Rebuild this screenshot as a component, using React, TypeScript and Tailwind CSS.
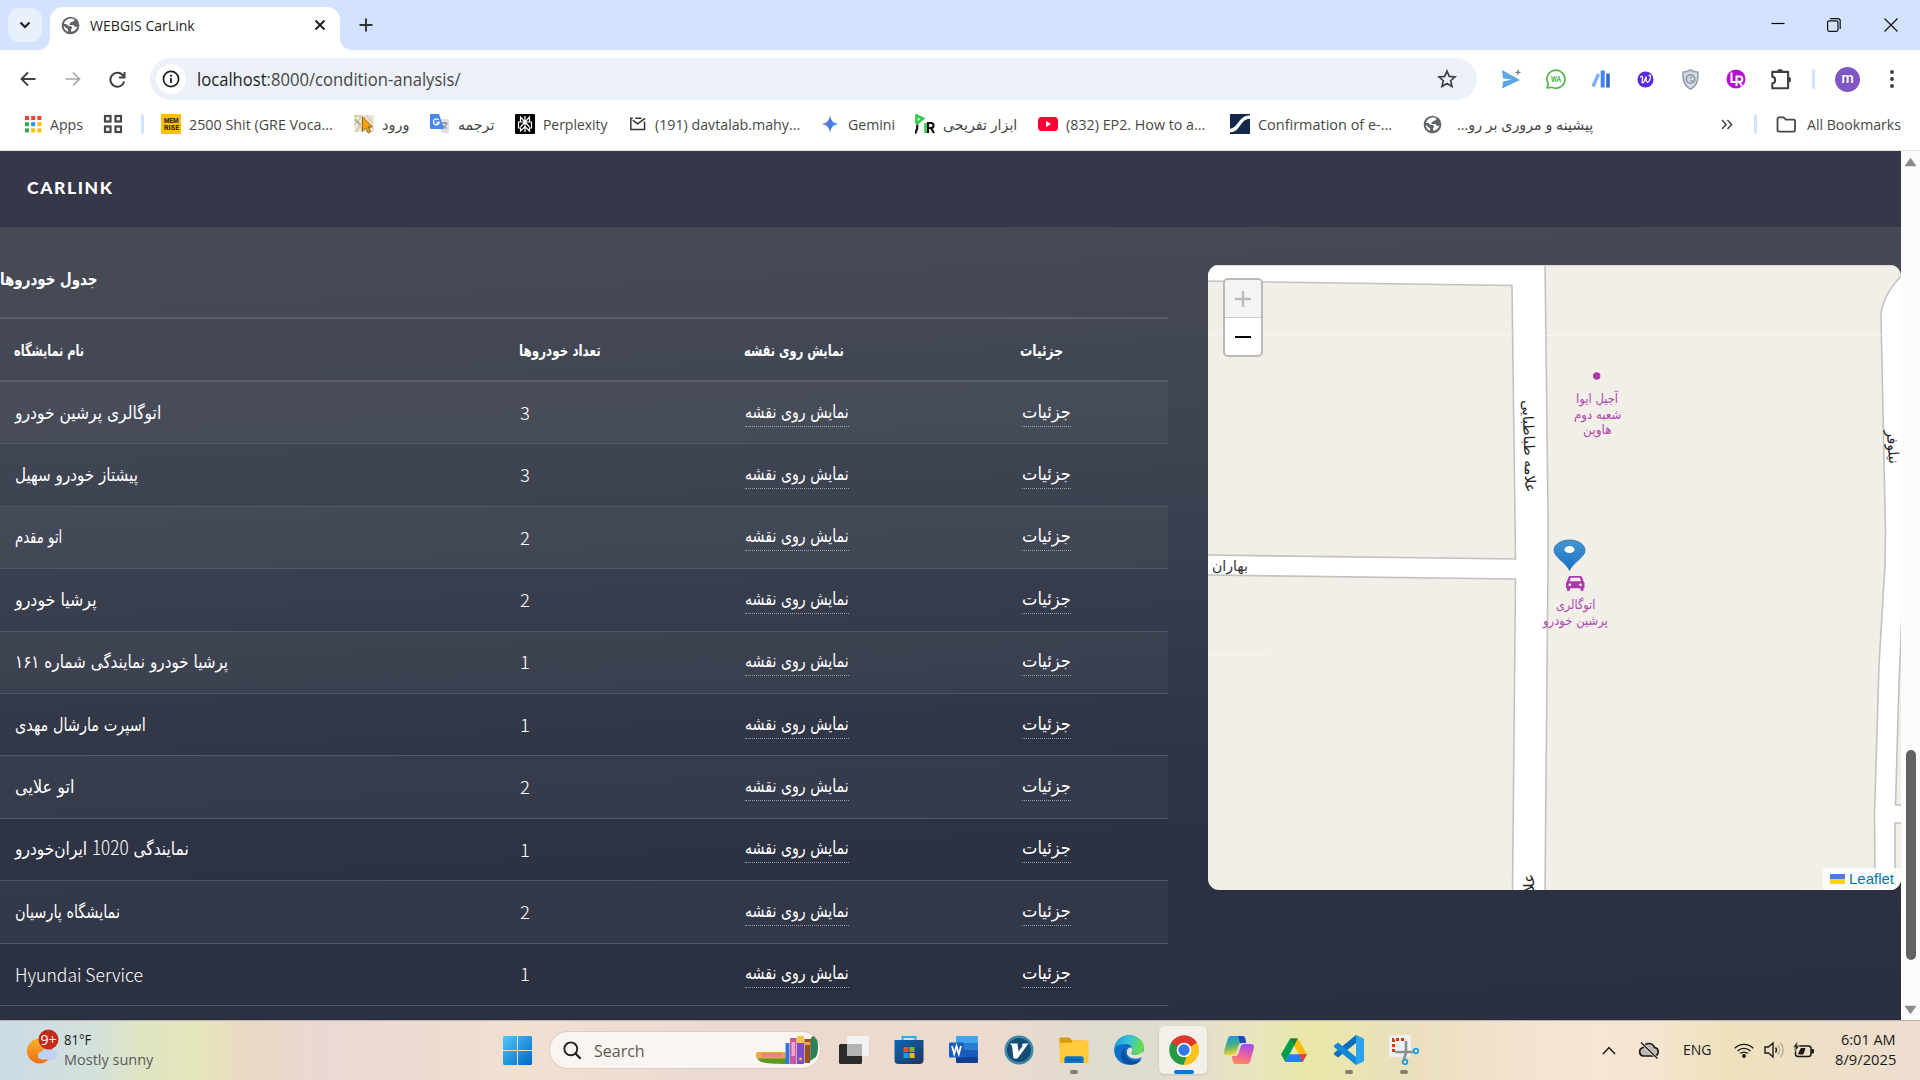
import React, { useLayoutEffect, useRef, useState } from "react";

const ui = "font-['Open_Sans','Noto_Sans','DejaVu_Sans',sans-serif]";

/* Single line of text squeezed or stretched to a given width. */
function Fit({ w, className = "", rtl = false, children }: { w: number; className?: string; rtl?: boolean; children: React.ReactNode }) {
  const ref = useRef<HTMLSpanElement>(null);
  const [k, setK] = useState(1);
  useLayoutEffect(() => {
    if (ref.current) setK(w / ref.current.offsetWidth);
  }, [w]);
  return (
    <span className="block shrink-0 whitespace-nowrap" style={{ width: w }}>
      <span ref={ref} dir={rtl ? "rtl" : "ltr"} className={"inline-block origin-left align-top " + className} style={{ transform: `scaleX(${k})` }}>
        {children}
      </span>
    </span>
  );
}

const Globe = () => (
  <svg viewBox="0 0 20 20" className="h-[19px] w-[19px]">
    <circle cx="10" cy="10" r="9.3" fill="#5f6368" />
    <path d="M10 2.6c2.2 0 3 .5 4.2 1.4-.3 1.5-1.5 2.2-3.200 2.300-1 .2-.7 1.400-1.700 1.600-1 .2-.8 1.300.2 1.500h3c1.600.2 1.300 2.200 3 2 .7 0 1.300-.1 1.800-.4-.9 3-3.300 5-6.500 5.600l-.3-1.900c-.2-1.300 1.300-1.600 1.200-2.600-.2-1.400-2.300-1.500-3.400-1.600C6.700 10.300 6.600 8.600 4.900 8.500H3.100C3.900 5 6.700 2.600 10 2.600z" fill="#fff" />
    <path d="M2.800 10.500c1.700.2 1.500 2 3.200 2.400 1.300.4 1.500 1.400 1.500 3.800C4.800 15.700 2.900 13.400 2.800 10.500z" fill="#fff" />
  </svg>
);

const Sep = () => <span className="block h-[20px] w-[3px] rounded bg-[#d3e3fd]" />;

function TabStrip() {
  return (
    <div className="flex h-[50px] items-start bg-[#d3e3fd]">
      <button className="ml-2 mt-2 flex h-[34px] w-[34px] items-center justify-center rounded-[11px] bg-[#e9f0fd]">
        <svg viewBox="0 0 12 8" className="h-[8px] w-[12px]"><path d="M1.500 1.500 6 6l4.500-4.500" fill="none" stroke="#1f1f1f" strokeWidth="2.200" /></svg>
      </button>
      <svg viewBox="0 0 12 12" className="-ml-[4px] mt-[38px] h-[12px] w-[12px]"><path d="M12 0v12H0A12 12 0 0 0 12 0z" fill="#fff" /></svg>
      <div className="mt-[7px] flex h-[43px] w-[290px] items-center rounded-t-[13px] bg-white pb-[7px] pl-[11px]">
        <Globe />
        <div className="ml-[10px] w-[220px] pt-px"><Fit w={105} className={`${ui} text-[15px] text-[#1f1f1f]`}>WEBGIS CarLink</Fit></div>
        <svg viewBox="0 0 12 12" className="ml-[4px] h-[12px] w-[12px] shrink-0"><path d="M1.500 1.500l9 9M10.500 1.500l-9 9" stroke="#1f1f1f" strokeWidth="1.900" /></svg>
      </div>
      <svg viewBox="0 0 12 12" className="mt-[38px] h-[12px] w-[12px]"><path d="M0 0v12h12A12 12 0 0 1 0 0z" fill="#fff" /></svg>
      <svg viewBox="0 0 14 14" className="ml-[7px] mt-[18px] h-[14px] w-[14px]"><path d="M7 .5v13M.5 7h13" stroke="#333" strokeWidth="1.900" /></svg>
      <div className="ml-auto mr-[22px] flex">
        <svg viewBox="0 0 14 14" className="mt-[17px] h-[14px] w-[14px]"><path d="M.5 6.500h13" stroke="#000" strokeWidth="1.200" /></svg>
        <svg viewBox="0 0 14 14" className="ml-[42px] mt-[18px] h-[14px] w-[14px]" fill="none" stroke="#111" strokeWidth="1.200"><rect x=".6" y="2.800" width="10.400" height="10.500" rx="1.500" /><path d="M3 .7h8c1.400 0 2.200.8 2.200 2.200v8" /></svg>
        <svg viewBox="0 0 14 14" className="ml-[43px] mt-[18px] h-[14px] w-[14px]"><path d="M.5.5l13 13M13.500.5l-13 13" stroke="#111" strokeWidth="1.200" /></svg>
      </div>
    </div>
  );
}

const extensions = [
  <svg key="a" viewBox="0 0 20 20" className="h-[20px] w-[20px]"><path d="M1 1l18 10L1 19.500l1.200-7.300 8.800-1.400-9-1.500z" fill="#5ba7e3" /><path d="M16.500 .3v6M13.500 3.300h6" stroke="#fff" strokeWidth="3" /><path d="M17 .8v5M14.500 3.300h5" stroke="#777" strokeWidth="1.300" /></svg>,
  <svg key="b" viewBox="0 0 22 22" className="h-[22px] w-[22px]"><path d="M2.200 19.800l1-4A9 9 0 1 1 7 19.300z" fill="#fff" stroke="#52b84b" strokeWidth="1.700" /><text x="11" y="14.200" textAnchor="middle" textLength="10" lengthAdjust="spacingAndGlyphs" fontFamily="Open Sans, sans-serif" fontWeight="700" fontSize="9" fill="#46b03f">WA</text></svg>,
  <svg key="c" viewBox="0 0 20 20" className="h-[20px] w-[20px]"><path d="M7.500 5 2 17.500" stroke="#80aefa" strokeWidth="3.400" /><path d="M11.700 1.500v17" stroke="#4285f4" strokeWidth="4" /><path d="M17 4.500v14" stroke="#326acb" strokeWidth="3.600" /></svg>,
  <svg key="d" viewBox="0 0 18 18" className="h-[17px] w-[17px]"><circle cx="9" cy="9" r="8.500" fill="#5b2be0" /><path d="M3.500 7c2.200-3.500 3 0 2 3.500-.8 3 1.500 3 3-1.500 1-3 1.500-4 1.200-.6-.3 5 3 4 4.300-.6.8-3.500-.6-4.500-1.500-2.200" fill="none" stroke="#fff" strokeWidth="1.300" /></svg>,
  <svg key="e" viewBox="0 0 18 22" className="h-[21px] w-[17px]"><path d="M9 .8c2.500 1.700 5 2.300 8 2.400 0 8-.5 14-8 18-7.500-4-8-10-8-18C4 3.100 6.500 2.500 9 .8z" fill="#d5dbe4" stroke="#8d98aa" strokeWidth="1.500" /><circle cx="9" cy="10.500" r="4.500" fill="none" stroke="#8794a8" strokeWidth="1.700" /><path d="M8.500 9.500 11 8M9 12l3 1" stroke="#8794a8" strokeWidth="1.500" /></svg>,
  <svg key="f" viewBox="0 0 20 20" className="h-[20px] w-[20px]"><circle cx="10" cy="10" r="9.500" fill="#b310cf" /><path d="M5.500 3.500v9.500h5M10.500 17V7.500h3.200a2.600 2.600 0 0 1 0 5.300h-3M13 12.800l3 4" fill="none" stroke="#fff" strokeWidth="2" /></svg>,
  <svg key="g" viewBox="0 0 22 22" className="h-[24px] w-[24px]"><path d="M3 4.500h14.500v15H3v-4.300c3.500-.6 3.500-6 0-6.400z" fill="none" stroke="#3f4145" strokeWidth="1.900" strokeLinejoin="round" /><path d="M7.500 4.500a2.600 2.600 0 0 1 5.200 0zM17.500 9a2.700 2.700 0 0 1 0 5.400z" fill="#3f4145" /></svg>,
];

function Toolbar() {
  return (
    <div className="flex h-[58px] items-center">
      <svg viewBox="0 0 16 16" className="ml-[20px] h-[16px] w-[16px]"><path d="M15.500 8H1.500M8 1.500 1.500 8 8 14.500" fill="none" stroke="#3f4145" strokeWidth="1.900" /></svg>
      <svg viewBox="0 0 16 16" className="ml-[29px] h-[16px] w-[16px]"><path d="M.5 8h14M8 1.500 14.500 8 8 14.500" fill="none" stroke="#a3a5a8" strokeWidth="1.700" /></svg>
      <svg viewBox="0 0 17 17" className="ml-[28px] h-[17px] w-[17px]"><path d="M14.300 5A7 7 0 1 0 15.200 10.500M15.500 1v5.600H10" fill="none" stroke="#3f4145" strokeWidth="2" /></svg>
      <div className="ml-[24px] flex h-[42px] w-[1327px] items-center rounded-full bg-[#ecf0f9]">
        <span className="ml-[6px] flex h-[30px] w-[30px] items-center justify-center rounded-full bg-white">
          <svg viewBox="0 0 18 18" className="h-[18px] w-[18px]"><circle cx="9" cy="9" r="7.600" fill="none" stroke="#1f1f1f" strokeWidth="1.700" /><path d="M9 8v5M9 4.800v1.900" stroke="#1f1f1f" strokeWidth="1.800" /></svg>
        </span>
        <div className="ml-[11px]"><Fit w={264} className={`${ui} text-[17.5px] text-[#474747]`}><span className="text-[#1f1f1f]">localhost</span>:8000/condition-analysis/</Fit></div>
        <svg viewBox="0 0 20 20" className="ml-auto mr-[20px] h-[20px] w-[20px]"><path d="M10 2l2.300 5.400 5.700.5-4.300 3.800 1.300 5.700-5-3-5 3 1.300-5.700L2 7.900l5.700-.5z" fill="none" stroke="#3f4145" strokeWidth="1.700" /></svg>
      </div>
      <div className="ml-[11px] flex">
        {extensions.map((e, i) => <span key={i} className="flex w-[45px] items-center justify-center">{e}</span>)}
      </div>
      <div className="ml-[9px]"><Sep /></div>
      <span className="ml-[20px] flex h-[25px] w-[25px] items-center justify-center rounded-full bg-[#7e57c2] pb-[2px] font-['Roboto',sans-serif] text-[14px] font-medium text-white">m</span>
      <svg viewBox="0 0 6 20" className="ml-[29px] h-[20px] w-[6px]" fill="#3f4145"><circle cx="3" cy="3" r="2" /><circle cx="3" cy="10" r="2" /><circle cx="3" cy="17" r="2" /></svg>
    </div>
  );
}

const appDots = ["#f44336", "#f44336", "#f44336", "#34a853", "#2196f3", "#fbbc05", "#34a853", "#fbbc05", "#fbbc05"];

const bm = {
  apps: <svg viewBox="0 0 18 18" className="h-[18px] w-[18px]">{appDots.map((c, i) => <rect key={i} x={1 + (i % 3) * 6.200} y={1 + Math.floor(i / 3) * 6.200} width="4" height="4" fill={c} />)}</svg>,
  grid: <svg viewBox="0 0 20 20" className="h-[20px] w-[20px]" fill="none" stroke="#474747" strokeWidth="2.200"><rect x="2" y="2" width="5.500" height="5.500" /><rect x="12.500" y="2" width="5.500" height="5.500" /><rect x="2" y="12.500" width="5.500" height="5.500" /><rect x="12.500" y="12.500" width="5.500" height="5.500" /></svg>,
  mem: <span className="flex h-[20px] w-[20px] flex-col items-center justify-center bg-[#ffc107] font-['Roboto',sans-serif] text-[8px] font-black leading-[7px] text-[#3a2c10]"><Fit w={15}>MEM</Fit><Fit w={15}>RISE</Fit></span>,
  login: <svg viewBox="0 0 20 20" className="h-[20px] w-[20px]"><path fill="#eee4d4" d="M0 1h20v17H0z" /><path d="M0 2h9M2 18 11 3M0 11l8-8M9 18 4 6M12 1l7 8" stroke="#c9b48c" strokeWidth="1" /><path d="M1 5l4 5M12 15l5-2" stroke="#86b98a" strokeWidth="1.500" /><path d="M8.500 3v14l3.200-3 2.400 5 2.600-1.300-2.500-4.900h4.300z" fill="#ff9f0a" stroke="#70531c" strokeWidth=".8" /></svg>,
  translate: <svg viewBox="0 0 20 20" className="h-[20px] w-[20px]"><path d="M7 5h11a1 1 0 0 1 1 1v12a1 1 0 0 1-1 1h-6z" fill="#dcdfe4" /><path d="M11.500 9h6M14.500 8v1.500M16.500 9.500c-.7 2.500-2 4-4 5M13 11c.8 1.500 2 2.600 4 3.500" stroke="#6f7f8f" fill="none" /><path d="M1 0h8l5 15H1.500A1.500 1.500 0 0 1 0 13.500V1a1 1 0 0 1 1-1z" fill="#4a86ee" /><path d="M8.800 6.200A2.900 2.900 0 1 0 9.200 8.500H6.500" fill="none" stroke="#fff" strokeWidth="1.300" /></svg>,
  perp: <svg viewBox="0 0 20 20" className="h-[20px] w-[20px]"><rect width="20" height="20" rx="1" fill="#000" /><path d="M10 2v16M10 8 5.500 3v5h9V3zM5.500 8H3.500v6h2v3L10 12.500 14.500 17v-3h2V8h-2M10 8l-4.500 5M10 8l4.500 5" stroke="#fff" strokeWidth="1.200" fill="none" /></svg>,
  mail: <svg viewBox="0 0 20 16" className="h-[14px] w-[18px]"><path d="M4 1.500H1.800v12.700h15.700V5M7 1.500h7M4 3.500l5.500 4.200L18 1.500" fill="none" stroke="#333" strokeWidth="1.700" /></svg>,
  gem: <svg viewBox="0 0 20 20" className="h-[20px] w-[20px]"><defs><linearGradient id="gem" x1="0" y1="0" x2="1" y2="0"><stop offset="0" stopColor="#9b72cb" /><stop offset=".5" stopColor="#4a7bdc" /><stop offset="1" stopColor="#2fa3ec" /></linearGradient></defs><path d="M10 1c.8 5.500 3 8.200 8.500 9-5.500.8-7.700 3.500-8.500 9-.8-5.500-3-8.200-8.500-9C7 9.200 9.200 6.500 10 1z" fill="url(#gem)" /></svg>,
  pr: <svg viewBox="0 0 20 20" className="h-[20px] w-[20px]" fill="none"><path d="M1.500 10V1.500L8 4.500 2 9.500" stroke="#2ecc40" strokeWidth="2.600" /><path d="M2.200 10.500v4l-2 5" stroke="#111" strokeWidth="2.200" /><path d="M10.500 19V9" stroke="#2ecc40" strokeWidth="2.500" /><path d="M13 19V9h3a2.500 2.500 0 0 1 0 5h-3M16 14l3 5" stroke="#111" strokeWidth="2.200" /></svg>,
  yt: <svg viewBox="0 0 20 20" className="h-[20px] w-[20px]"><rect y="3" width="20" height="14" rx="3.500" fill="#ff0033" /><path d="M8 7l5 3-5 3z" fill="#fff" /></svg>,
  s: <svg viewBox="0 0 20 20" className="h-[20px] w-[20px]"><path fill="#14284b" d="M0 0h20v20H0z" /><path d="M0 16.500c10 0 8-13 20-13.500" fill="none" stroke="#fff" strokeWidth="3.400" /></svg>,
  folder: <svg viewBox="0 0 22 18" className="h-[17px] w-[21px]"><path d="M1.500 3a1.500 1.500 0 0 1 1.500-1.500h5l2.300 2.300h8.200A1.500 1.500 0 0 1 20 5.300V15a1.500 1.500 0 0 1-1.500 1.500H3A1.500 1.500 0 0 1 1.500 15z" fill="none" stroke="#474747" strokeWidth="1.900" /></svg>,
};

type BM = { cls: string; icon: React.ReactNode; text?: string; w?: number; rtl?: boolean; gap?: string };
const bookmarks: BM[] = [
  { cls: "w-[79px]", icon: bm.apps, text: "Apps", w: 33 },
  { cls: "w-[38px]", icon: bm.grid },
  { cls: "w-[20px]", icon: <Sep /> },
  { cls: "w-[193px]", icon: bm.mem, text: "2500 Shit (GRE Voca...", w: 144 },
  { cls: "w-[76px]", icon: bm.login, text: "ورود", w: 27, rtl: true },
  { cls: "w-[85px]", icon: bm.translate, text: "ترجمه", w: 36, rtl: true },
  { cls: "w-[114px]", icon: bm.perp, text: "Perplexity", w: 64 },
  { cls: "w-[191px]", icon: bm.mail, text: "(191) davtalab.mahy...", w: 145 },
  { cls: "w-[95px]", icon: bm.gem, text: "Gemini", w: 47 },
  { cls: "w-[123px]", icon: bm.pr, text: "ابزار تفریحی", w: 74, rtl: true },
  { cls: "w-[192px]", icon: bm.yt, text: "(832) EP2. How to a...", w: 139 },
  { cls: "w-[193px]", icon: bm.s, text: "Confirmation of e-...", w: 134 },
  { cls: "w-[297px]", icon: <Globe />, text: "پیشینه و مروری بر رو...", w: 136, rtl: true, gap: "gap-[15px]" },
];

function Bookmarks() {
  return (
    <div className={`flex h-[42px] items-center pb-[10px] pl-[24px] pt-0 text-[15px] text-[#474747] ${ui}`}>
      {bookmarks.map((b, i) => (
        <div key={i} className={`flex shrink-0 items-center ${b.gap ?? "gap-[8px]"} ${b.cls}`}>
          {b.icon}
          {b.text && <Fit w={b.w!} rtl={b.rtl}>{b.text}</Fit>}
        </div>
      ))}
      <svg viewBox="0 0 14 12" className="h-[11px] w-[14px]"><path d="M1.500 1 6 6l-4.500 5M7.500 1 12 6l-4.500 5" fill="none" stroke="#474747" strokeWidth="1.700" /></svg>
      <div className="ml-[20px]"><Sep /></div>
      <div className="ml-[19px] flex items-center gap-[10px]">{bm.folder}<Fit w={94}>All Bookmarks</Fit></div>
    </div>
  );
}

const latin = "font-['Noto_Sans_CJK_SC',sans-serif] font-light";
const fa = "font-['DejaVu_Sans',sans-serif]";

const rows: [React.ReactNode, number, string][] = [
  ["اتوگالری پرشین خودرو", 146, "3"],
  ["پیشتاز خودرو سهیل", 123, "3"],
  ["اتو مقدم", 47, "2"],
  ["پرشیا خودرو", 82, "2"],
  ["پرشیا خودرو نمایندگی شماره ۱۶۱", 213, "1"],
  ["اسپرت مارشال مهدی", 131, "1"],
  ["اتو علایی", 60, "2"],
  [<>نمایندگی <span className={`${latin} text-[20px] leading-none`}>1020</span> ایران‌خودرو</>, 174, "1"],
  ["نمایشگاه پارسیان", 105, "2"],
  ["Hyundai Service", 128, "1"],
];

const Link = ({ w, children }: { w: number; children: string }) => (
  <a className="block h-[28px] border-b border-dotted border-white/50 text-[18px] leading-[26px] text-white" style={{ width: w }}>
    <Fit w={w} rtl className={fa}>{children}</Fit>
  </a>
);

function CarTable() {
  return (
    <section className="w-[1168px]">
      <h2 className="h-[90px] pt-[37px] text-[17px] font-bold leading-[30px] text-white"><Fit w={97} rtl className={fa}>جدول خودروها</Fit></h2>
      <div className="grid h-[65px] grid-cols-[505px_225px_276px_162px] items-center border-y-2 border-[#5b5f6d] pt-[2px] text-[16px] font-bold text-white">
        <div className="pl-[14px]"><Fit w={70} rtl className={fa}>نام نمایشگاه</Fit></div>
        <div className="pl-[14px]"><Fit w={82} rtl className={fa}>تعداد خودروها</Fit></div>
        <div className="pl-[14px]"><Fit w={100} rtl className={fa}>نمایش روی نقشه</Fit></div>
        <div className="pl-[14px]"><Fit w={43} rtl className={fa}>جزئیات</Fit></div>
      </div>
      <div>
        {rows.map(([name, w, n], i) => (
          <div key={i} className="grid h-[62.4px] grid-cols-[505px_225px_276px_162px] items-center border-b border-[#525767] text-[18px] text-white odd:bg-white/[0.035]">
            <div className="pl-[15px]">
              {i === 9 ? <Fit w={w} className={`${latin} relative top-px text-[18.5px] text-white`}>{name}</Fit> : <Fit w={w} rtl className={`${fa} leading-[28px]`}>{name}</Fit>}
            </div>
            <div className={`pl-[15px] text-[18.500px] text-white ${latin}`}>{n}</div>
            <div className="pl-[15px]"><Link w={104}>نمایش روی نقشه</Link></div>
            <div className="pl-[16px]"><Link w={49}>جزئیات</Link></div>
          </div>
        ))}
      </div>
    </section>
  );
}

function StreetMap() {
  return (
    <div className="relative h-[625px] w-[693px] overflow-hidden rounded-[11px] bg-[#f2efe9]">
      <svg viewBox="0 0 693 625" className="block h-[625px] w-[693px]">
        <g fill="#fff" stroke="#c3c2bf" strokeWidth="1.600">
          <path d="M-3-3H337L340 250V300L337 628H304.500L307.500 314-3 310V290L307.500 294 304 20.500-3 16z" />
          <path d="M696 8C682 22 674 35 673 50L677.500 268 677 300 671 400 666.500 548 667 628H687V558H696V540H687.500L691 418 696 300z" />
        </g>
        <path d="M0 .7H693" stroke="#d6d3d1" />
        <path d="M0 70.500H693M0 390.500H58" stroke="#fff" strokeOpacity=".35" />
        <circle cx="388.700" cy="111" r="3.700" fill="#ac39ac" />
        <defs><linearGradient id="pin" x1="0" y1="0" x2="0" y2="1"><stop offset="0" stopColor="#4596cf" /><stop offset="1" stopColor="#1870c9" /></linearGradient></defs>
        <path d="M361.500 305.500C358.500 298 346 292 346 285.500 346 279.500 353 275 361.500 275S377 279.500 377 285.500C377 292 364.500 298 361.500 305.500z" fill="url(#pin)" stroke="#2a6fa8" strokeWidth=".8" />
        <ellipse cx="361.500" cy="284.500" rx="5" ry="3.600" fill="#fff" />
        <path d="M362.500 311h9.500c1.200 0 2 .6 2.300 1.700l1.300 3.800c.6.4.9 1 .9 1.800v5h-1v2.500h-3V323.300h-10.500v2.500h-3v-2.500h-1v-5c0-.8.3-1.400.9-1.800l1.300-3.800c.3-1.100 1.100-1.700 2.300-1.700zm.2 1.700-1.100 3.600h11.400l-1.100-3.600z" fill="#ac39ac" />
        <circle cx="361.800" cy="319.800" r="1.400" fill="#f2efe9" /><circle cx="372.500" cy="319.800" r="1.400" fill="#f2efe9" />
      </svg>
      <div className={`absolute left-[365px] top-[126px] flex w-[48px] flex-col items-center text-[13px] leading-[15.5px] text-[#b048b0] ${fa}`}>
        <Fit w={42} rtl>آجیل ایوا</Fit><Fit w={47} rtl>شعبه دوم</Fit><Fit w={29} rtl>هاوین</Fit>
      </div>
      <div className={`absolute left-[334px] top-[332px] flex w-[66px] flex-col items-center text-[13px] leading-[15.5px] text-[#b048b0] ${fa}`}>
        <Fit w={39} rtl>اتوگالری</Fit><Fit w={65} rtl>پرشین خودرو</Fit>
      </div>
      <div className={`absolute left-[4px] top-[290px] text-[14.500px] leading-[22px] text-[#333] ${fa}`}><Fit w={36} rtl>بهاران</Fit></div>
      <div className={`absolute left-[275px] top-[170px] rotate-[88deg] text-[14.500px] leading-[22px] text-[#222] ${fa}`}><Fit w={92} rtl>علامه طباطبایی</Fit></div>
      <div className={`absolute left-[668px] top-[171px] rotate-[86deg] text-[14.500px] leading-[22px] text-[#222] ${fa}`}><Fit w={34} rtl>نیلوفر</Fit></div>
      <div className={`absolute left-[312px] top-[607px] -rotate-90 text-[14.500px] leading-[22px] text-[#222] ${fa}`}><Fit w={18} rtl>علا</Fit></div>
      <div className="absolute left-[14.5px] top-[13px] h-[79px] w-[40px] overflow-hidden rounded-[5px] border-2 border-[#bbb9b6] bg-white">
        <div className="flex h-[38px] items-center justify-center border-b border-[#ccc] bg-[#f4f4f4]"><svg viewBox="0 0 16 16" className="h-[16px] w-[16px]"><path d="M8 0v16M0 8h16" stroke="#bbb" strokeWidth="2.400" /></svg></div>
        <div className="flex h-[38px] items-center justify-center"><svg viewBox="0 0 16 4" className="h-[4px] w-[16px]"><path d="M0 2h16" stroke="#000" strokeWidth="2.200" /></svg></div>
      </div>
      <div className="absolute bottom-0 right-0 flex h-[22px] w-[78px] items-center bg-white/80 pl-[7px] font-['Liberation_Sans',sans-serif] text-[15px] text-[#0078A8]">
        <span className="mr-[4px] block h-[10px] w-[15px] border-b-[5px] border-[#ffd500] bg-[#4c7be1]" />
        <Fit w={45}>Leaflet</Fit>
      </div>
    </div>
  );
}

function Scrollbar() {
  return (
    <div className="flex w-[19px] flex-col items-center bg-[#fcfcfc]">
      <svg viewBox="0 0 14 10" className="mt-[6px] h-[10px] w-[13px]"><path d="M7 .5 13.500 9.500H.5z" fill="#8b8b8b" /></svg>
      <span className="mt-[583px] block h-[210px] w-[10px] rounded-full bg-[#636363]" />
      <svg viewBox="0 0 14 10" className="mb-[5px] mt-auto h-[10px] w-[13px]"><path d="M7 9.500 13.500.5H.5z" fill="#8b8b8b" /></svg>
    </div>
  );
}

const apps = {
  win: <svg viewBox="0 0 29 29" className="h-[29px] w-[29px]"><defs><linearGradient id="win" x1="0" y1="0" x2="1" y2="1"><stop offset="0" stopColor="#4cc8fb" /><stop offset="1" stopColor="#0067c5" /></linearGradient></defs><path d="M1 0h13v14H0V1zM15 0h13l1 1v13H15zM0 15h14v14H1l-1-1zM15 15h14v13l-1 1H15z" fill="url(#win)" /></svg>,
  task: <svg viewBox="0 0 30 28" className="h-[28px] w-[30px]"><rect y="8" width="23" height="20" rx="1.500" fill="#2b2b2b" /><rect x="8" y="0" width="22" height="20" rx="1.500" fill="#f2f2f2" /><path d="M8 8h15v12H8z" fill="#b3b3b3" /></svg>,
  store: <svg viewBox="0 0 30 30" className="h-[30px] w-[30px]"><defs><linearGradient id="st" x1="0" y1="0" x2="1" y2="1"><stop offset="0" stopColor="#0a69b3" /><stop offset="1" stopColor="#22345c" /></linearGradient></defs><path d="M8.500 6V2h13v4" fill="none" stroke="#1fb0ef" strokeWidth="2" /><path d="M.5 5h29v20a4 4 0 0 1-4 4h-21a4 4 0 0 1-4-4z" fill="url(#st)" /><path fill="#f25022" d="M9.500 12h5v5h-5z" /><path fill="#7fba00" d="M15.500 12h5v5h-5z" /><path fill="#00a4ef" d="M9.500 18h5v5h-5z" /><path fill="#ffb900" d="M15.500 18h5v5h-5z" /></svg>,
  word: <svg viewBox="0 0 30 28" className="h-[28px] w-[30px]"><path fill="#41a5ee" d="M8 0h20a1 1 0 0 1 1 1v6H7V1z" /><path fill="#2b7cd3" d="M7 7h22v7H7z" /><path fill="#185abd" d="M7 14h22v7H7z" /><path fill="#103f91" d="M7 21h22v5a1 1 0 0 1-1 1H8a1 1 0 0 1-1-1z" /><rect y="6.500" width="15" height="15" rx="1" fill="#1b5bbd" /><path d="M3 10l2.200 8 2.300-8 2.300 8L12 10" fill="none" stroke="#fff" strokeWidth="1.800" /></svg>,
  v: <svg viewBox="0 0 30 30" className="h-[30px] w-[30px]"><circle cx="15" cy="15" r="14.500" fill="#3f87ab" /><circle cx="15" cy="15" r="12" fill="#134e72" /><path d="M6 8.500h7.500l1 8 4.500-6H17.500L19 8.500h5.500L13.500 23.500H9.500L8 11z" fill="#fff" /></svg>,
  files: <svg viewBox="0 0 30 28" className="h-[27px] w-[30px]"><path d="M0 2a1.500 1.500 0 0 1 1.500-1.500h8.500l3 3h14V12H0z" fill="#dd9a08" /><path d="M0 6h12l2-2.500h14.500A1.500 1.500 0 0 1 30 5v22H0z" fill="#ffcb3d" /><path d="M5 27v-4.500A2.500 2.500 0 0 1 7.500 20h15a2.500 2.500 0 0 1 2.500 2.500V27z" fill="#0f74c8" /><path d="M8 23.700h14" stroke="#0b4c8c" /></svg>,
  edge: <svg viewBox="0 0 30 30" className="h-[30px] w-[30px]"><defs><linearGradient id="e1" x1="0" y1="0" x2="1" y2=".3"><stop offset="0" stopColor="#1597dd" /><stop offset=".5" stopColor="#35c3d6" /><stop offset="1" stopColor="#67dc51" /></linearGradient></defs><circle cx="15" cy="15" r="14.800" fill="#0f6fcb" /><path d="M.5 13C2 4 8.500.2 15 .2c9 0 15 6 15 12 0 5-4 7.500-8 7.500-3.500 0-5-1.200-4.500-2.500 2-2 1.500-7-3.500-8C8.500 8.500 3 10 .5 13z" fill="url(#e1)" /><path d="M11.500 13c-2 6 2 12 8 13 3 .4 5.500-.5 8-1.500-4.500 6.500-13.500 7-18.500 1.500-4-4.500-2-10 2.500-13z" fill="#0c4f9e" /><path d="M18 13c1 2 .2 3.500-.6 4.500-.6 1.300 1.200 2.600 4.600 2.300 3-.2 6-1.600 7.500-4.300L30 21l-3.500 1.700c-6 2.300-13.500.3-13.700-5.500C12.800 14 15.500 11.500 18 13z" fill="#e6e0d2" /></svg>,
  chrome: <svg viewBox="0 0 30 30" className="h-[30px] w-[30px]"><path d="M15 15 2.200 7.500A15 15 0 0 1 28 7.800z" fill="#e0392b" /><path d="M15 15 2.200 7.500A15 15 0 0 0 15 30z" fill="#249a45" /><path d="M15 15 28 7.500A15 15 0 0 1 14 30z" fill="#fcc21b" /><path d="M15 7.500H28L21 12zM8.500 18.500 2.200 7.500 11 10z" fill="#e0392b" /><path d="M21.500 18.700 15 30l-1.500-8z" fill="#fcc21b" /><path d="M8.500 11 2.200 7.500l6.300 11.200L14.500 30l3-8z" fill="#249a45" /><circle cx="15" cy="15" r="7.300" fill="#fff" /><circle cx="15" cy="15" r="5.700" fill="#3578e5" /></svg>,
  copilot: <svg viewBox="0 0 30 28" className="h-[28px] w-[30px]"><defs><linearGradient id="c1" x1="0" y1="0" x2=".2" y2="1"><stop offset="0" stopColor="#1a8fea" /><stop offset=".55" stopColor="#4ab27a" /><stop offset="1" stopColor="#f2d033" /></linearGradient><linearGradient id="c2" x1=".5" y1="0" x2=".2" y2="1"><stop offset="0" stopColor="#a34fe8" /><stop offset=".5" stopColor="#ee5fa0" /><stop offset="1" stopColor="#fb9252" /></linearGradient></defs><path d="M7 0h11c2.500 0 3 1.500 3.500 4L22 7h-4c-2 0-3 1-3.500 3l-2 6c-.7 2-1.500 3-3.500 3H3c-3 0-3.400-2-2.600-5L3.500 3.500C4.200 1.300 5 0 7 0z" fill="url(#c1)" /><path d="M14 0h4c2.500 0 3 1.500 3.500 4L22 7h-6z" fill="#1a49c4" /><path d="M23 28H12c-2.500 0-3-1.500-3.500-4L8 20h3c2 0 3-1 3.500-3l2-6c.7-2 1.500-3 3.500-3h7c3 0 3.400 2 2.600 5l-3.100 11.500c-.7 2.200-1.500 3.500-3.500 3.500z" fill="url(#c2)" /></svg>,
  drive: <svg viewBox="0 0 28 26" className="h-[25px] w-[28px]"><path d="M10 .5h8L5 25 .5 17z" fill="#00a04a" /><path d="M10 .5h8l9.500 16.500H19z" fill="#ffbc0a" /><path d="M9 17h18.500L23 25H5z" fill="#2580f6" /><path d="M10 .5h8L14 8z" fill="#14803e" /><path d="M19 17h8.500L23 25z" fill="#ea4335" /></svg>,
  code: <svg viewBox="0 0 30 30" className="h-[30px] w-[30px]"><path d="M22 0v8L4 22.500 0 19.500v-1.500z" fill="#0a6fb8" /><path d="M22 30v-8L4 7.500 0 10.500V12z" fill="#1388d6" /><path d="M22 0l7 3.200a1.500 1.500 0 0 1 1 1.400v20.800a1.500 1.500 0 0 1-1 1.400L22 30z" fill="#29a3ee" /></svg>,
  snip: <svg viewBox="0 0 30 30" className="h-[30px] w-[30px]"><rect width="22" height="22" rx="2" fill="#eef0f3" /><path d="M4.500 17V4.500H17" fill="none" stroke="#d83b01" strokeWidth="3" strokeDasharray="3 2" /><path d="M17 6v12l-2 6M6 17h18" fill="none" stroke="#8a8f96" strokeWidth="2.600" /><circle cx="27" cy="16" r="2.300" fill="none" stroke="#1b9de2" strokeWidth="1.800" /><circle cx="16" cy="27" r="2.300" fill="none" stroke="#1b9de2" strokeWidth="1.800" /></svg>,
};

const dock: { icon: React.ReactNode; mark?: string; tile?: boolean }[] = [
  { icon: apps.task }, { icon: apps.store }, { icon: apps.word }, { icon: apps.v },
  { icon: apps.files, mark: "w-[8px] bg-[#857d6f]" }, { icon: apps.edge },
  { icon: apps.chrome, mark: "w-[20px] bg-[#0078d4]", tile: true },
  { icon: apps.copilot }, { icon: apps.drive },
  { icon: apps.code, mark: "w-[8px] bg-[#857d6f]" }, { icon: apps.snip, mark: "w-[8px] bg-[#857d6f]" },
];

function Taskbar() {
  return (
    <footer className={`flex h-[60px] items-center border-t border-[#b9b1ad] pb-px bg-[linear-gradient(90deg,#cbdbe6_0px,#d3e1dc_90px,#dfe4c3_140px,#e5e5b9_200px,#ead9c4_245px,#ecd8d4_330px,#eddad0_420px,#f2e0d1_520px,#ebdad0_700px,#eddace_980px,#dedcd0_1120px,#e2ddcf_1180px,#e9e5bd_1260px,#e9e8a8_1310px,#eadfbe_1410px,#f6e4d5_1560px,#f7e5d4_1640px,#eee2bd_1725px,#ede0c6_1810px,#eeddd0_1920px)] ${ui}`}>
      <svg viewBox="0 0 34 38" className="-mt-[5px] ml-[26px] h-[38px] w-[34px]">
        <defs><linearGradient id="sun" x1="0" y1="0" x2="0" y2="1"><stop offset="0" stopColor="#f7b52c" /><stop offset="1" stopColor="#f06c14" /></linearGradient></defs>
        <circle cx="13.500" cy="22" r="12.500" fill="url(#sun)" />
        <path d="M16 30.500a4 4 0 0 1 0-8 5.500 5.500 0 0 1 9.500-1 4.600 4.600 0 1 1 .5 9z" fill="#bdd2f7" />
        <circle cx="22.500" cy="10.500" r="10" fill="#c42b1c" />
        <text x="22.500" y="15.500" textAnchor="middle" fontSize="14" fill="#fff" fontFamily="Open Sans, sans-serif">9+</text>
      </svg>
      <div className="ml-[4px] w-[439px] text-[14.500px] leading-[20px]">
        <Fit w={27} className="text-[#1a1a1a]">81°F</Fit>
        <Fit w={89} className="text-[#5a5a58]">Mostly sunny</Fit>
      </div>
      {apps.win}
      <div className="ml-[17px] flex h-[38px] w-[272px] items-center overflow-hidden rounded-full border border-[#dccdc3] bg-[#faf5f1] pl-[13px]">
        <svg viewBox="0 0 20 20" className="h-[19px] w-[19px]"><circle cx="8.200" cy="8.200" r="6.800" fill="none" stroke="#222" strokeWidth="2" /><path d="M13.200 13.200 18.500 18.700" stroke="#222" strokeWidth="2.400" /></svg>
        <div className="ml-[12px] pt-px"><Fit w={51} className="text-[16px] text-[#5d5a58]">Search</Fit></div>
        <svg viewBox="0 0 62 30" className="ml-auto mr-[2px] h-[30px] w-[62px]">
          <path d="M1 23c3 5 8 6 30 6v-7z" fill="#5c9a1e" /><rect x="0" y="17" width="30" height="6.500" rx="2" fill="#e9a94a" /><rect x="5" y="18" width="22" height="4.500" rx="2" fill="#e88585" />
          <path fill="#2f76dd" d="M29.500 8h4v21h-4z" /><path fill="#c45a9d" d="M34 3h6.500v26H34z" /><path fill="#f0a4cf" d="M35.500 7h3.500v14h-3.500z" />
          <path fill="#7a4fc9" d="M41 1h7v28h-7z" /><path fill="#f4c542" d="M41 1h7v7h-7z" /><circle cx="44.500" cy="24" r="1.500" fill="#f4c542" /><path fill="#9c4f22" d="M48.500 4H55l-1 24h-5.500z" /><path fill="#e8a55a" d="M49 7h5v3h-5z" />
          <path d="M55 3c2-3 5-2 6 0 1.500 7 1.500 14-1 19l-6 4z" fill="#2f8055" />
        </svg>
      </div>
      <div className="ml-[5px] flex">
        {dock.map((d, i) => (
          <div key={i} className="relative flex h-[48px] w-[55px] items-center justify-center">
            {d.tile && <span className="absolute left-[3px] top-0 h-[48px] w-[48px] rounded-[5px] bg-[#f3efe9] shadow-sm" />}
            <span className="relative">{d.icon}</span>
            {d.mark && <span className={`absolute bottom-0 h-[4px] rounded-full ${d.mark}`} />}
          </div>
        ))}
      </div>
      <div className="ml-auto flex items-center pr-[24px]">
        <svg viewBox="0 0 14 9" className="h-[9px] w-[14px]"><path d="M1 8l6-6.500L13 8" fill="none" stroke="#1a1a1a" strokeWidth="1.500" /></svg>
        <svg viewBox="0 0 22 18" className="ml-[22px] h-[18px] w-[22px]"><path d="M5.500 15a4.300 4.300 0 0 1-.3-8.500 6 6 0 0 1 11.300 0A4.300 4.300 0 0 1 16.500 15z" fill="#bdbab5" stroke="#1a1a1a" strokeWidth="1.700" /><path d="M4.500 3 19 17" stroke="#f4ead9" strokeWidth="2.600" /><path d="M3 1.500 19.500 17.500" stroke="#1a1a1a" strokeWidth="1.400" /></svg>
        <div className="ml-[23px] pt-px"><Fit w={29} className="text-[14.500px] text-[#1a1a1a]">ENG</Fit></div>
        <svg viewBox="0 0 20 16" className="ml-[22px] h-[16px] w-[20px]" fill="none" stroke="#1a1a1a" strokeWidth="1.400"><path d="M.8 6.200a13 13 0 0 1 18.400 0M3.600 9a9 9 0 0 1 12.800 0M6.300 11.600a5.300 5.300 0 0 1 7.400 0" /><circle cx="10" cy="14" r="1.200" fill="#1a1a1a" /></svg>
        <svg viewBox="0 0 21 18" className="ml-[10px] h-[18px] w-[21px]" fill="none" stroke="#1a1a1a" strokeWidth="1.400"><path d="M1 6h3.500L9 2v14l-4.500-4H1zM11.500 6.500a4 4 0 0 1 0 5" /><path d="M14 4.500a7 7 0 0 1 0 9M16.500 2a10.500 10.500 0 0 1 0 14" stroke="#b3aa96" /></svg>
        <svg viewBox="0 0 22 18" className="ml-[8px] h-[18px] w-[22px]"><rect x="2.500" y="5" width="15.500" height="10.500" rx="2.500" fill="none" stroke="#1a1a1a" strokeWidth="1.500" /><path d="M18.500 8.500h2v3.500h-2zM8 7.500h4l-2 5.500H5.500z" fill="#1a1a1a" stroke="#1a1a1a" /><path d="M4.500 0 0 6.500h2.500L1.500 11l5-6H4z" fill="#1a1a1a" stroke="#eee2c2" strokeWidth=".6" /></svg>
        <div className="ml-[19px] flex w-[62px] flex-col items-end text-[14.500px] leading-[20px] text-[#1a1a1a]">
          <Fit w={55}>6:01 AM</Fit>
          <Fit w={61}>8/9/2025</Fit>
        </div>
      </div>
    </footer>
  );
}

export default function App() {
  return (
    <div className="flex h-[1080px] w-[1920px] flex-col overflow-hidden bg-white">
      <TabStrip />
      <Toolbar />
      <Bookmarks />
      <div className="h-px bg-[#dfe5dd]" />
      <div className="flex h-[869px] overflow-hidden">
        <div className="w-[1901px]">
          <header className="flex h-[76px] items-center bg-[#363849] pb-[2px] pl-[27px]">
            <Fit w={87} className="font-['Lato',sans-serif] text-[16.500px] font-black tracking-[1.500px] text-white">CARLINK</Fit>
          </header>
          <main className="flex h-[793px] overflow-hidden bg-[linear-gradient(177deg,#484b55_0%,#434854_15%,#3e4352_32%,#373c4c_48%,#303546_64%,#2c3141_80%,#2b3040_100%)]">
            <CarTable />
            <div className="ml-[40px] mt-[38px]"><StreetMap /></div>
          </main>
        </div>
        <Scrollbar />
      </div>
      <Taskbar />
    </div>
  );
}
